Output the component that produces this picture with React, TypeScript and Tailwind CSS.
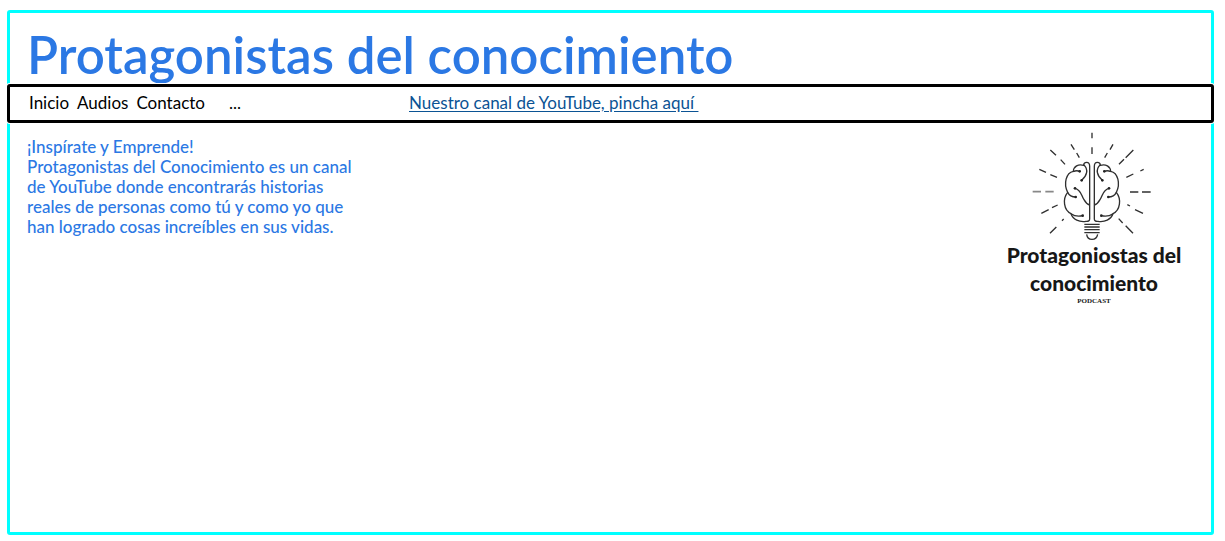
const navLinks = ['Inicio', 'Audios', 'Contacto'];

const rays = [
  'M189 23V40M189 67V87',
  'M126 58L136 74M143 84L151 98',
  'M252 58L243 74M235 84L227 98',
  'M64 75L81 91M95 104L108 118',
  'M313 75L290 98M285 103L270 118',
  'M31 133L51 142M64 149L84 157',
  'M344 133L334 138M313 147L292 157',
  'M37 265L59 254M69 248L86 240',
  'M342 265L318 254M303 243L295 239',
  'M63 325L82 306M99 287L104 282',
  'M312 325L290 302M281 294L269 281',
];

function BrainHalf() {
  return (
    <>
      <path d="M182 282V124Q182 112 173 112Q164 112 164 121C148 116 134 124 133 139C111 143 103 177 116 202C100 222 104 255 126 266C132 284 151 292 171 289Q182 290 182 282Z" />
      <path d="M133 140Q142 135 152 139M165 120C179 134 174 152 158 166M138 190C157 195 156 210 165 224Q172 237 182 240M116 202Q123 216 140 216M126 266Q141 277 161 272" />
      <g fill="#222" stroke="none">
        <circle cx="152" cy="139" r="4" />
        <circle cx="158" cy="166" r="4" />
        <circle cx="138" cy="190" r="4" />
        <circle cx="140" cy="216" r="4" />
        <circle cx="161" cy="272" r="4" />
      </g>
    </>
  );
}

function BrainBulb() {
  return (
    <svg viewBox="0 0 390 360" className="h-[120px] w-[130px]" fill="none" stroke="#303030" strokeWidth="4" aria-hidden="true">
      <g strokeWidth="4">
        {rays.map((d) => (
          <path key={d} d={d} />
        ))}
        <path d="M11 200H36M49 200H74" stroke="#888" strokeWidth="5" />
        <path d="M303 201H328M339 201H365" />
      </g>
      <BrainHalf />
      <g transform="translate(378 0) scale(-1 1)">
        <BrainHalf />
      </g>
      <path d="M166 298H212M166 306H212M166 314H212M166 323H212" />
      <path d="M173 328Q175 343 189 343Q203 343 206 328" />
    </svg>
  );
}

export default function App() {
  return (
    <div className="flex min-h-screen flex-col bg-white pt-[10px] pr-[11px] pb-[6px] pl-[7px] font-['Lato','Open_Sans',sans-serif]">
      <div className="flex grow flex-col rounded-[3px] border-[3px] border-[#00ffff]">
        <header className="px-[17px]">
          <h1 className="h-[71px] pt-[12px] text-[51px] leading-[60px] font-semibold whitespace-nowrap text-[#2b78e4]">
            Protagonistas del conocimiento
          </h1>
        </header>

        <nav className="-mx-[3px] flex h-[39px] items-center rounded-[3px] border-[3px] border-black bg-white px-[19px] pb-[2px] text-[17px] leading-[20px] text-black shadow-[0_0_0_1px_white]">
          <div className="flex w-[380px] shrink-0 gap-2">
            {navLinks.map((label) => (
              <a key={label} href={`#${label.toLowerCase()}`}>
                {label}
              </a>
            ))}
            <button type="button" aria-label="Más" className="ml-4">
              ...
            </button>
          </div>
          <a href="#youtube" className="whitespace-pre text-[#0b5394] underline underline-offset-2">
            {'Nuestro canal de YouTube, pincha aquí '}
          </a>
        </nav>

        <main className="flex items-start justify-between pr-[27px] pl-[17px]">
          <p className="w-[335px] pt-[14px] text-[17px] leading-[20px] font-medium text-[#2b78e4]">
            ¡Inspírate y Emprende!
            <br />
            Protagonistas del Conocimiento es un canal de YouTube donde encontrarás historias reales de personas como tú
            y como yo que han logrado cosas increíbles en sus vidas.
          </p>
          <figure className="flex w-[180px] shrink-0 flex-col items-center pt-[2px] text-[#171717]">
            <BrainBulb />
            <figcaption className="flex flex-col items-center text-[21px] leading-[28px] font-black whitespace-nowrap">
              <span className="-mt-1">Protagoniostas del</span>
              <span>conocimiento</span>
              <span className="font-['Liberation_Serif',serif] text-[7px] leading-[8px] font-bold">PODCAST</span>
            </figcaption>
          </figure>
        </main>
      </div>
    </div>
  );
}
